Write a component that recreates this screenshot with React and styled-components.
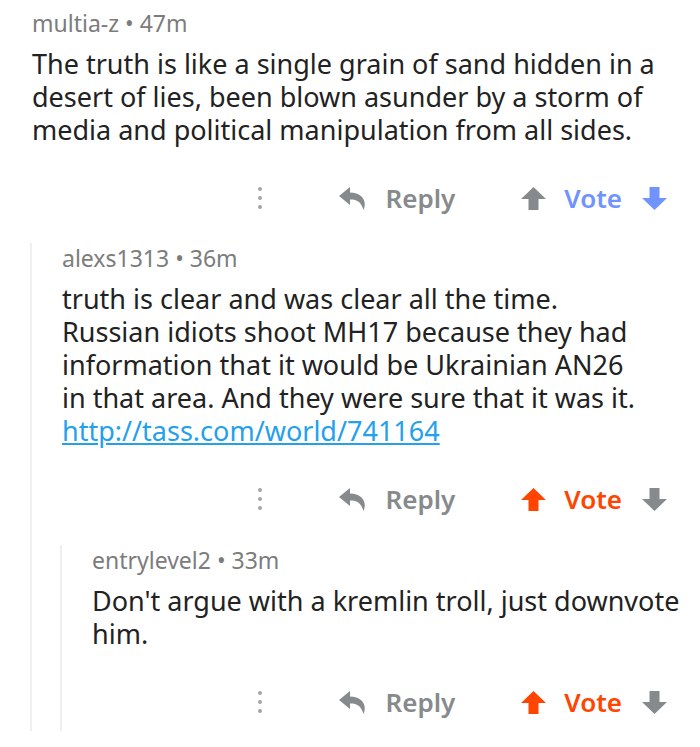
import React from 'react';
import styled, { createGlobalStyle } from 'styled-components';

const GlobalStyle = createGlobalStyle`
    body {
        margin: 0;
        background: #ffffff;
        font-family: "Noto Sans", "Open Sans", sans-serif;
    }
`;

const Page = styled.div`
    padding: 8px 16px 0 32px;
`;

const CommentBox = styled.div`
    display: flex;
    flex-direction: column;
`;

const Meta = styled.div`
    font-size: 23px;
    line-height: 30px;
    color: #7c7c7c;
`;

const Body = styled.div`
    margin-top: 9px;
    padding-right: ${props => props.$inset || 0}px;
    font-size: 27px;
    line-height: 33px;
    color: #222222;
    a {
        color: #24a0ed;
        text-decoration: underline;
    }
`;

const ActionBar = styled.div`
    display: flex;
    justify-content: flex-end;
    align-items: center;
    height: 44px;
    margin-top: 30px;
    padding-right: 17px;
`;

const More = styled.div`
    display: flex;
    flex-direction: column;
    gap: 5px;
    margin-right: 77px;
    span {
        width: 4px;
        height: 4px;
        border-radius: 50%;
        background: #a5a4a4;
    }
`;

const ActionButton = styled.div`
    display: flex;
    align-items: center;
    gap: ${props => props.$gap || 18}px;
    margin-right: ${props => props.$space || 0}px;
    font-family: "Noto Sans", sans-serif;
    font-weight: 600;
    font-size: 26px;
    color: ${props => props.$color || '#878a8c'};
`;

const Thread = styled.div`
    margin-top: ${props => props.$gap}px;
    margin-left: -2px;
    padding-left: 30px;
    padding-bottom: ${props => props.$bottom || 0}px;
    border-left: 2px solid #edeff1;
`;

const ReplyIcon = () => (
    <svg width="28" height="23" viewBox="0 0 28 23">
        <path
            fill="#878a8c"
            d="M11 0 L0 9 L11 18 V12.5 C17.5 12.3 22 14.5 24.5 23 C28.5 14 23 5.8 11 5.5 Z"
        />
    </svg>
);

const Arrow = ({ color, down }) => (
    <svg width="25" height="23" viewBox="0 0 25 23" style={down ? { transform: 'rotate(180deg)' } : null}>
        <path fill={color} d="M12.5 0 L25 12 H17.5 V23 H7.5 V12 H0 Z" />
    </svg>
);

const Actions = ({ vote }) => {
    const blue = '#7193ff';
    const orange = '#ff4500';
    const grey = '#878a8c';
    const upColor = vote === 'up' ? orange : grey;
    const downColor = vote === 'down' ? blue : grey;
    const textColor = vote === 'up' ? orange : vote === 'down' ? blue : grey;
    return (
        <ActionBar>
            <More><span /><span /><span /></More>
            <ActionButton $space={66}>
                <ReplyIcon />
                Reply
            </ActionButton>
            <ActionButton $gap={18} $space={20} $color={textColor}>
                <Arrow color={upColor} />
                Vote
            </ActionButton>
            <Arrow color={downColor} down />
        </ActionBar>
    );
};

const Comment = ({ author, age, inset, vote, children, text }) => (
    <CommentBox>
        <Meta>{author} • {age}</Meta>
        <Body $inset={inset}>{text}</Body>
        <Actions vote={vote} />
        {children}
    </CommentBox>
);

class App extends React.Component {
    render() {
        return (
            <Page>
                <GlobalStyle />
                <Comment
                    author='multia-z'
                    age='47m'
                    vote='down'
                    text='The truth is like a single grain of sand hidden in a desert of lies, been blown asunder by a storm of media and political manipulation from all sides.'
                >
                    <Thread $gap={23}>
                        <Comment
                            author='alexs1313'
                            age='36m'
                            inset={30}
                            vote='up'
                            text={<>truth is clear and was clear all the time. Russian idiots shoot MH17 because they had information that it would be Ukrainian AN26 in that area. And they were sure that it was it. <a href='#'>http://tass.com/world/741164</a></>}
                        >
                            <Thread $gap={24} $bottom={7}>
                                <Comment
                                    author='entrylevel2'
                                    age='33m'
                                    vote='up'
                                    text="Don't argue with a kremlin troll, just downvote him."
                                />
                            </Thread>
                        </Comment>
                    </Thread>
                </Comment>
            </Page>
        );
    }
}

export default App;
